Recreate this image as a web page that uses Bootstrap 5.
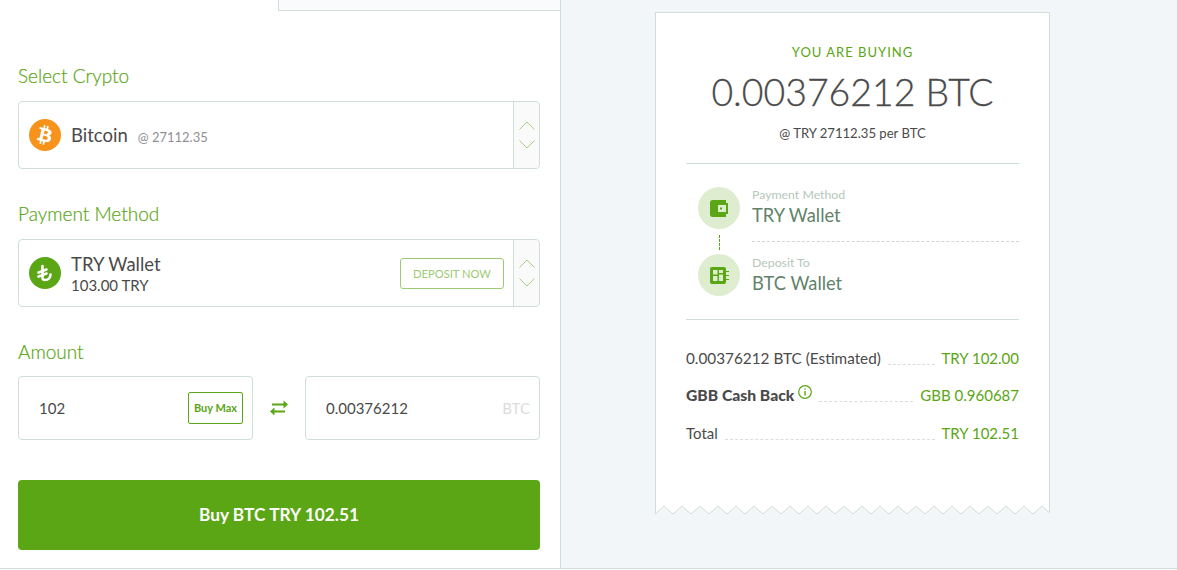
<!DOCTYPE html>
<html lang="en">
<head>
  <meta charset="UTF-8">
  <title>Buy Crypto</title>
  <meta name="viewport" content="width=device-width, initial-scale=1">
  <link href="https://cdn.jsdelivr.net/npm/bootstrap@5.3.3/dist/css/bootstrap.min.css" rel="stylesheet">
  <style>
    html, body { height: 570px; overflow: hidden; }
    body {
      font-family: "Lato", "Liberation Sans", sans-serif;
      color: #4a4a4a;
      background: #fff;
    }
    .page-wrap { height: 569px; border-bottom: 1px solid #cfdfd5; }
    .left-side { width: 561px; border-right: 1px solid #cfdfd5; flex: none; }
    .right-side { background: #f2f6f9; padding-top: 12px; }
    .tab-row { height: 11px; }
    .tab-on { width: 278px; }
    .tab-off { background: #f9fbfc; border-left: 1px solid #cfdfd5; border-bottom: 1px solid #cfdfd5; }
    .form-area { padding: 0 20px 0 18px; }
    .field-label { color: #5aa614; font-size: 19px; font-weight: 300; line-height: 24px; margin-bottom: 13px; -webkit-text-stroke: .2px #5aa614; }
    .first-label { padding-top: 53px; }
    .amount-label { margin-bottom: 12px; }
    .select-box { height: 68px; border: 1px solid #cfdfd5; border-radius: 4px; margin-bottom: 33px; }
    .select-main { padding: 0 9px 0 10px; gap: 10px; }
    .coin-icon { width: 32px; height: 32px; flex: none; }
    .coin-text { padding-top: 2px; }
    .coin-name { font-size: 18.5px; line-height: 22px; color: #4a4a4a; }
    .coin-rate { font-size: 13px; color: #8f8f94; margin-left: 10px; }
    .coin-bal { font-size: 15px; line-height: 20px; color: #4a4a4a; }
    .arrows-box { width: 26px; background: #fafafa; border-left: 1px solid #cfdfd5; gap: 10px; border-radius: 0 4px 4px 0; }
    .deposit-btn {
      font-size: 11.200px; color: #9ccb74; border: 1px solid #9ccb74; border-radius: 3px;
      width: 104px; height: 31px; line-height: 29px; padding: 0; background: #fff;
    }
    .amount-row { margin-bottom: 40px; }
    .amount-box { width: 235px; height: 64px; border: 1px solid #cfdfd5; border-radius: 4px; padding: 0 9px 0 20px; font-size: 15px; }
    .swap-col { width: 52px; }
    .buy-max { font-size: 11px; font-weight: 700; color: #5aa614; border: 1px solid #5aa614; border-radius: 2px; width: 55px; height: 32px; line-height: 30px; padding: 0; background: #fff; }
    .unit-hint { color: #dcdcdc; font-size: 15px; }
    .buy-btn { height: 70px; background: #5aa614; border: 0; border-radius: 4px; color: #fff; font-size: 17.300px; font-weight: 700; }
    .receipt { width: 395px; height: 503px; background: #fff; border: 1px solid #cfdfd5; border-bottom: 0; margin-left: 94px; padding: 0 30px; position: relative; }
    .zigzag { position: absolute; left: -1px; bottom: 0; width: 395px; height: 10px; display: block; }
    .buy-head { color: #5aa614; font-size: 13px; letter-spacing: 1px; line-height: 16px; padding-top: 31px; }
    .buy-amount { font-size: 37.400px; font-weight: 300; line-height: 48px; margin-top: 8px; color: #4a4a4a; -webkit-text-stroke: .3px #4a4a4a; }
    .buy-rate { font-size: 13.100px; line-height: 16px; margin-top: 9px; padding-bottom: 22px; border-bottom: 1px solid #cfdfd5; }
    .route-area { padding: 23px 0 0 12px; height: 156px; border-bottom: 1px solid #cfdfd5; }
    .route-dot { width: 42px; height: 42px; border-radius: 50%; background: #deedd0; flex: none; }
    .route-label { font-size: 12.300px; line-height: 14px; color: #b4c8bb; }
    .route-val { font-size: 18.300px; line-height: 25px; padding-top: 1px; color: #5f8269; }
    .route-text { margin-left: 12px; flex: 1; padding-top: 2px; }
    .route-top { padding-top: 1px; padding-bottom: 13px; border-bottom: 1px dashed #d5d5d5; }
    .dot-line { width: 1px; height: 15px; margin: -7px 0 4px 21px; border-left: 1px dashed #5aa614; }
    .sum-row { font-size: 15px; line-height: 20px; height: 37px; gap: 7px; }
    .sum-mid { height: 38px; }
    .sum-name { font-size: 15.300px; }
    .sum-bold { font-size: 15.700px; font-weight: 900; }
    .sum-fill { flex: 1; border-bottom: 1px dashed #dcdcdc; height: 17px; }
    .sum-val { color: #5aa614; }
    .sum-list { padding-top: 28px; }
    .info-mark { width: 14px; height: 14px; margin-left: -3px; flex: none; }
  </style>
</head>
<body>

  <div class="d-flex page-wrap">
    <div class="left-side">
      <div class="d-flex tab-row">
        <div class="tab-on"></div>
        <div class="tab-off flex-grow-1"></div>
      </div>
      <div class="form-area">
        <div class="field-label first-label">Select Crypto</div>
        <div class="select-box d-flex">
          <div class="select-main d-flex align-items-center flex-grow-1">
            <svg class="coin-icon" viewBox="0 0 32 32">
              <circle cx="16" cy="16" r="16" fill="#f7931a"/>
              <path fill="#fff" d="M22.6 14c.3-2.1-1.3-3.2-3.5-4l.7-2.8-1.7-.4-.7 2.7-1.4-.3.7-2.7-1.7-.4-.7 2.8-1.1-.3-2.4-.6-.5 1.8s1.3.3 1.3.3c.7.2.8.6.8 1l-.8 3.2-1.1 4.4c-.1.2-.3.5-.8.4l-1.3-.3-.8 2 2.2.6 1.2.3-.7 2.8 1.7.4.7-2.8 1.4.4-.7 2.8 1.7.4.7-2.8c2.9.5 5.1.3 6-2.3.7-2.1 0-3.3-1.5-4.1 1.1-.3 1.9-1 2.1-2.4zm-3.9 5.4c-.5 2.1-4 1-5.2.7l.9-3.7c1.2.3 4.8.9 4.3 3zm.5-5.4c-.5 1.9-3.4.9-4.3.7l.8-3.3c1 .2 4 .7 3.5 2.6z"/>
            </svg>
            <div class="coin-text coin-name">Bitcoin<span class="coin-rate">@ 27112.35</span></div>
          </div>
          <div class="arrows-box d-flex flex-column align-items-center justify-content-center">
            <svg width="16" height="9" viewBox="0 0 16 9"><path d="M.5 8.5 8 1l7.500 7.500" fill="none" stroke="#a4d07c"/></svg>
            <svg width="16" height="9" viewBox="0 0 16 9"><path d="M.5.5 8 8 15.500.5" fill="none" stroke="#a4d07c"/></svg>
          </div>
        </div>

        <div class="field-label">Payment Method</div>
        <div class="select-box d-flex">
          <div class="select-main d-flex align-items-center flex-grow-1">
            <svg class="coin-icon" viewBox="0 0 32 32">
              <circle cx="16" cy="16" r="16" fill="#5aa614"/>
              <path fill="none" stroke="#fff" stroke-width="2.600" stroke-linecap="round" d="M13.500 9v11.500c0 1.500 1 2.500 2.500 2.500 3 0 5.500-2 5.500-5.500M9.500 15.500l8-3M9.500 19.500l8-3"/>
            </svg>
            <div class="coin-text flex-grow-1">
              <div class="coin-name">TRY Wallet</div>
              <div class="coin-bal">103.00 TRY</div>
            </div>
            <button class="deposit-btn" type="button">DEPOSIT NOW</button>
          </div>
          <div class="arrows-box d-flex flex-column align-items-center justify-content-center">
            <svg width="16" height="9" viewBox="0 0 16 9"><path d="M.5 8.5 8 1l7.500 7.500" fill="none" stroke="#a4d07c"/></svg>
            <svg width="16" height="9" viewBox="0 0 16 9"><path d="M.5.5 8 8 15.500.5" fill="none" stroke="#a4d07c"/></svg>
          </div>
        </div>

        <div class="field-label amount-label">Amount</div>
        <div class="d-flex amount-row">
          <div class="amount-box d-flex align-items-center justify-content-between">
            <span>102</span>
            <button class="buy-max" type="button">Buy Max</button>
          </div>
          <div class="swap-col d-flex align-items-center justify-content-center">
            <svg width="20" height="16" viewBox="0 0 20 16">
              <path fill="#5aa614" d="M3 3.500h11.500V.5L19 4.500l-4.500 4v-3H3zM16 10.500H5.500v-3L1 11.500l4.500 4v-3H16z"/>
            </svg>
          </div>
          <div class="amount-box d-flex align-items-center justify-content-between">
            <span>0.00376212</span>
            <span class="unit-hint">BTC</span>
          </div>
        </div>

        <button class="buy-btn w-100" type="button">Buy BTC TRY 102.51</button>
      </div>
    </div>

    <div class="right-side flex-grow-1">
      <div class="receipt">
        <div class="text-center buy-head">YOU ARE BUYING</div>
        <div class="text-center buy-amount">0.00376212 BTC</div>
        <div class="text-center buy-rate">@ TRY 27112.35 per BTC</div>

        <div class="route-area">
          <div class="d-flex align-items-start">
            <div class="route-dot d-flex align-items-center justify-content-center">
              <svg width="18" height="17" viewBox="0 0 18 17">
                <path fill="#5aa614" d="M2.500 0H16v3h2v11h-2v3H2.500C1.100 17 0 15.900 0 14.500v-12C0 1.100 1.100 0 2.500 0z"/>
                <rect x="8" y="5" width="8" height="7" fill="#deedd0"/>
                <rect x="10" y="7.500" width="2" height="2" fill="#5aa614"/>
              </svg>
            </div>
            <div class="route-text route-top">
              <div class="route-label">Payment Method</div>
              <div class="route-val">TRY Wallet</div>
            </div>
          </div>
          <div class="dot-line"></div>
          <div class="d-flex align-items-start">
            <div class="route-dot d-flex align-items-center justify-content-center">
              <svg width="19" height="17" viewBox="0 0 19 17">
                <rect x="0" y="0" width="16" height="17" rx="2" fill="#5aa614"/>
                <path fill="#deedd0" d="M3 3h4.500v4.500H3zM9 3h4v3H9zM9 7.500h4V14H9zM3 9h4.500v5H3z"/>
                <path stroke="#5aa614" d="M16 4.500h3M16 8.500h3M16 12.500h3"/>
              </svg>
            </div>
            <div class="route-text">
              <div class="route-label">Deposit To</div>
              <div class="route-val">BTC Wallet</div>
            </div>
          </div>
        </div>

        <div class="sum-list">
          <div class="d-flex sum-row">
            <span class="sum-name">0.00376212 BTC (Estimated)</span>
            <span class="sum-fill"></span>
            <span class="sum-val">TRY 102.00</span>
          </div>
          <div class="d-flex sum-row sum-mid">
            <span class="sum-bold">GBB Cash Back</span>
            <svg class="info-mark" viewBox="0 0 14 14">
              <circle cx="7" cy="7" r="6.300" fill="none" stroke="#5aa614" stroke-width="1.200"/>
              <path d="M7 6v4.500M7 3.500v1.300" stroke="#5aa614" stroke-width="1.400" fill="none"/>
            </svg>
            <span class="sum-fill"></span>
            <span class="sum-val">GBB 0.960687</span>
          </div>
          <div class="d-flex sum-row">
            <span>Total</span>
            <span class="sum-fill"></span>
            <span class="sum-val">TRY 102.51</span>
          </div>
        </div>

        <svg class="zigzag" width="395" height="10">
          <defs>
            <pattern id="zigPat" width="18" height="10" patternUnits="userSpaceOnUse">
              <path fill="#f2f6f9" d="M0 9 9 1l9 8v1H0z"/>
              <path fill="none" stroke="#cfdfd5" d="M0 9 9 1l9 8"/>
            </pattern>
          </defs>
          <rect width="395" height="10" fill="url(#zigPat)"/>
        </svg>
      </div>
    </div>
  </div>

  <script src="https://cdn.jsdelivr.net/npm/bootstrap@5.3.3/dist/js/bootstrap.bundle.min.js"></script>
</body>
</html>
